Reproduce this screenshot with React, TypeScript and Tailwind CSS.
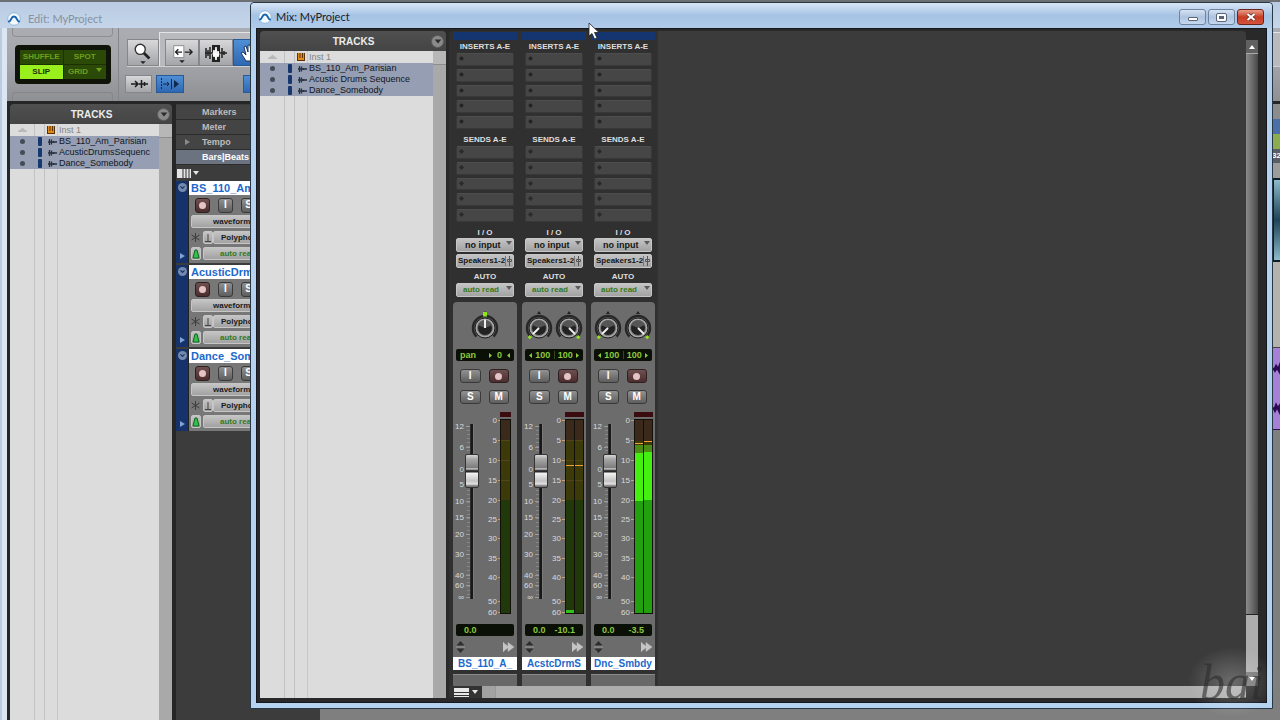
import { clsx } from "clsx";
import { ChevronDown } from "lucide-react";

type Track = { name: string; strip: string; mixName: string };

const tracks: Track[] = [
  { name: "BS_110_Am_Parisian", strip: "BS_110_Am_Prsn", mixName: "BS_110_Am_Parisian" },
  { name: "AcusticDrumsSequenc", strip: "AcusticDrmsSqnc", mixName: "Acustic Drums Sequence" },
  { name: "Dance_Somebody", strip: "Dance_Somebody", mixName: "Dance_Somebody" },
];

type Channel = {
  name: string;
  stereo: boolean;
  peak: string;
  lit?: boolean;
  hold?: number[];
};

const channels: Channel[] = [
  { name: "BS_110_A_", stereo: false, peak: "" },
  { name: "AcstcDrmS", stereo: true, peak: "-10.1", hold: [54, 54] },
  { name: "Dnc_Smbdy", stereo: true, peak: "-3.5", lit: true, hold: [32, 30] },
];

const faderMarks: [string, number][] = [
  ["12", 14], ["6", 35], ["0", 57], ["5", 72], ["10", 89], ["15", 105],
  ["20", 122], ["30", 142], ["40", 163], ["60", 173], ["∞", 185],
];

const meterMarks: [string, number][] = [
  ["0", 8], ["5", 28], ["10", 48], ["15", 68], ["20", 88], ["25", 107],
  ["30", 126], ["35", 146], ["40", 165], ["50", 189], ["60", 200],
];

const SCALE_FONT = "Liberation Sans, Arial, sans-serif";

function AppLogo() {
  return (
    <svg viewBox="0 0 14 14" className="size-[14px] shrink-0">
      <circle cx="7" cy="7" r="6.3" fill="#f4f9fd" stroke="#8fb9dc" />
      <path d="M2 9.5C4 9.5 4 4.5 7 4.5S10 9.5 12 9.5" fill="none" stroke="#1763ad" strokeWidth="2" strokeLinecap="round" />
    </svg>
  );
}

function WaveGlyph() {
  return (
    <svg viewBox="0 0 9 8" className="h-2 w-[9px]">
      <path d="M0 4H9M1.500 1V7M3.500 1.500V6.500M5.500 3V5" stroke="#26303f" strokeWidth="1.300" />
    </svg>
  );
}

function TrackList({ names, className }: { names: string[]; className: string }) {
  return (
    <aside className={clsx("flex shrink-0 flex-col", className)}>
      <header className="flex h-5 items-center rounded-t bg-gradient-to-b from-[#505050] to-[#444] pr-[2px]">
        <h2 className="flex-1 pl-4 text-center text-[10px] font-bold text-[#ececec]">TRACKS</h2>
        <button aria-label="Track list menu" className="grid size-[13px] place-items-center rounded-full border border-[#5c5c5c] bg-[#8a8a8a]">
          <svg viewBox="0 0 8 6" className="h-[5px] w-2"><path d="M0 0.500H8L4 5.500Z" fill="#2c2c2c" /></svg>
        </button>
      </header>
      <div className="flex min-h-0 flex-1 bg-[#dcdcdc]">
        <div className="relative flex-1">
          <div className="absolute inset-y-0 left-6 w-[11px] border-x border-[#c2c2c2]" />
          <div className="absolute inset-y-0 left-[47px] border-l border-[#c8c8c8]" />
          <ul className="relative text-[9px] leading-[11px] text-[#10161f]">
            <li className="flex h-3 items-center text-[#858585]">
              <span className="grid w-6 place-items-center">
                <svg viewBox="0 0 9 6" className="h-[6px] w-[9px]"><path d="M0 5H9V4L6.500 2.500L4.500 0.500L2.500 2.500L0 4Z" fill="#b9b9b9" /></svg>
              </span>
              <span className="w-3" />
              <span className="w-[13px]">
                <svg viewBox="0 0 8 8" className="ml-[1px] size-2">
                  <path d="M0 0H8V8H0Z" fill="#e08a1c" />
                  <path d="M0.500 0V8M7.500 0V8M0 7.500H8M3 0V5M5.500 0V5" stroke="#5a3206" />
                </svg>
              </span>
              <span>Inst 1</span>
            </li>
            {names.map((name) => (
              <li key={name} className="flex h-[11px] items-center bg-[#959eb2] whitespace-nowrap">
                <span className="grid w-6 place-items-center"><i className="size-[5px] rounded-full bg-[#454b57]" /></span>
                <span className="grid w-3 place-items-center"><i className="h-[9px] w-1 rounded-[1px] bg-[#17376f]" /></span>
                <span className="w-[13px] pl-[2px]"><WaveGlyph /></span>
                <span>{name}</span>
              </li>
            ))}
          </ul>
        </div>
        <div className="w-[13px] bg-[#a9a9a9]">
          <div className="h-[14px] border-b border-[#8d8d8d] bg-[#b7b7b7]" />
        </div>
      </div>
    </aside>
  );
}

const toolButton = "grid shrink-0 place-items-center border border-[#85868a] bg-gradient-to-b from-[#d8d8da] to-[#a4a5a9]";
const blueTool = "grid shrink-0 place-items-center border border-[#275a99] bg-gradient-to-b from-[#4f8fd6] to-[#2f68b2]";

function EditToolbar() {
  return (
    <div className="flex h-[73px] bg-gradient-to-b from-[#acadb2] via-[#a3a4a9] to-[#8f9094]">
      <div className="flex w-[112px] flex-col justify-between border-r border-[#85868a] px-[5px]">
        <div className="h-[9px] rounded-b border border-t-0 border-[#8e8f94]" />
        <div className="ml-[3px] grid h-[39px] w-[96px] grid-cols-2 gap-px rounded border-[5px] border-[#101408] bg-[#1c3005] text-[8px] font-bold text-[#6da01b]">
          <button className="bg-[#2b4a08]">SHUFFLE</button>
          <button className="bg-[#2b4a08]">SPOT</button>
          <button className="bg-[#9af01d] text-[#1c3005]">SLIP</button>
          <button className="flex items-center justify-end gap-2 bg-[#2b4a08] pr-1">
            GRID
            <svg viewBox="0 0 6 4" className="mb-1 h-1 w-[6px]"><path d="M0 0H6L3 4Z" fill="#6da01b" /></svg>
          </button>
        </div>
        <div className="h-[9px] rounded-t border border-b-0 border-[#85868a]" />
      </div>
      <div className="flex flex-1 flex-col pl-2">
        <div className="flex h-[39px] items-end border-b border-[#d0d0d3]">
          <button aria-label="Zoomer" className={clsx(toolButton, "h-[27px] w-8")}>
            <svg viewBox="0 0 24 24" className="size-[22px]">
              <circle cx="9" cy="8" r="5.500" fill="#fff" stroke="#333" strokeWidth="1.500" />
              <path d="M13 12L19 18" stroke="#222" strokeWidth="3" />
              <path d="M9 21H15L12 24Z" fill="#222" />
            </svg>
          </button>
          <div className="flex h-[34px] flex-1 items-end border-t border-l border-[#e4e4e6] bg-[#b9babd] pl-[5px]">
            <button aria-label="Trim" className={clsx(toolButton, "h-[27px] w-[34px]")}>
              <svg viewBox="0 0 26 24" className="h-[22px] w-6">
                <path d="M4 4H15V17H4Z" fill="#fff" stroke="#888" />
                <path d="M6 11H13M16 11H24M9 8L6 11L9 14M21 8L24 11L21 14" fill="none" stroke="#222" strokeWidth="1.500" />
                <path d="M10 20H16L13 23Z" fill="#222" />
              </svg>
            </button>
            <button aria-label="Selector" className={clsx(toolButton, "h-[27px] w-[34px]")}>
              <svg viewBox="0 0 24 22" className="h-[22px] w-6">
                <path d="M8 3H16V20H8Z" fill="#222" />
                <path d="M1 11H23M2 6V16M4 8V14M6 5V17M18 6V16M20 9V13" stroke="#222" strokeWidth="1.500" />
                <path d="M9 12L10 8L11 12L12 5L13 13L14 9L15 12L14 15L13 12L12 18L11 13L10 15Z" fill="#fff" stroke="#fff" />
              </svg>
            </button>
            <button aria-label="Grabber" className={clsx(blueTool, "h-[27px] w-[34px]")}>
              <svg viewBox="0 0 22 22" className="size-[22px]">
                <path d="M7 19L2 11L4 10L7 13L5 5L7 4L9 10V3H11L12 10L14 4H16L15 12L18 8L19 9L15 19Z" fill="#fff" stroke="#1c3762" />
              </svg>
            </button>
          </div>
        </div>
        <div className="flex flex-1 items-center gap-1">
          <button aria-label="Tab to transients" className={clsx(toolButton, "-ml-[2px] h-[18px] w-[27px]")}>
            <svg viewBox="0 0 20 12" className="h-3 w-5">
              <path d="M2 6H9M6 3L9 6L6 9M10 6H19M12.500 2V10M15.500 4V8" fill="none" stroke="#1d1d1d" strokeWidth="1.500" />
            </svg>
          </button>
          <button aria-label="Link timeline" className={clsx(blueTool, "h-[18px] w-7")}>
            <svg viewBox="0 0 20 12" className="h-3 w-5">
              <path d="M1.500 0V12" stroke="#10284d" strokeDasharray="2 1" />
              <path d="M3 6H9M7 4L9 6L7 8M11.500 1V11" fill="none" stroke="#10284d" />
              <path d="M14 2V10L19 6Z" fill="#10284d" />
            </svg>
          </button>
          <button aria-label="Mirrored editing" className={clsx(blueTool, "ml-[55px] h-[18px] w-7")} />
        </div>
      </div>
    </div>
  );
}

function RecButton({ className }: { className: string }) {
  return (
    <button aria-label="Record enable" className={clsx("grid place-items-center rounded-[3px] border border-[#2f2020] bg-gradient-to-b from-[#6e5050] to-[#4c2d2e]", className)}>
      <i className="size-[7px] rounded-full bg-[#e6c4c6]" />
    </button>
  );
}

const keyButton = "rounded-[3px] border border-[#3a3a3a] bg-gradient-to-b from-[#929292] to-[#5e5e5e] text-[10px] leading-none font-bold text-white";
const greyField = "rounded-[2px] border border-[#c6c6c6] bg-gradient-to-b from-[#c4c4c4] to-[#a2a2a2] font-bold";

function EditTrack({ name }: { name: string }) {
  return (
    <section className="mb-[2px] flex h-[82px] bg-[#777]">
      <div className="flex w-3 flex-col items-center justify-between bg-[#15336a] pt-[2px] pb-1">
        <span className="grid size-[9px] place-items-center rounded-full bg-[#7489ad]">
          <ChevronDown size={7} strokeWidth={4} className="text-[#15336a]" />
        </span>
        <svg viewBox="0 0 5 6" className="h-[6px] w-[5px]"><path d="M0 0V6L5 3Z" fill="#7fa3d8" /></svg>
      </div>
      <div className="min-w-0 flex-1 border-l border-[#222]">
        <h3 className="h-[14px] bg-white pl-[2px] text-[11px] leading-[14px] font-bold whitespace-nowrap text-[#1c69cc]">{name}</h3>
        <div className="flex h-5 items-center gap-2 pl-[6px]">
          <RecButton className="size-[15px]" />
          <button className={clsx(keyButton, "size-[15px]")}>I</button>
          <button className={clsx(keyButton, "size-[15px]")}>S</button>
        </div>
        <div className="flex flex-col gap-[3px] pl-[2px] text-[8px] text-[#1a1a1a]">
          <select aria-label="Track view" className={clsx(greyField, "h-[13px] appearance-none pl-[21px]")}>
            <option>waveform</option>
          </select>
          <div className="flex">
            <svg viewBox="0 0 9 9" className="mt-[2px] mr-[3px] size-[9px]">
              <path d="M4.500 0V9M0.500 2L8.500 7M8.500 2L0.500 7" stroke="#3c3c3c" />
            </svg>
            <span className={clsx(greyField, "grid h-[13px] w-[10px] place-items-center")}>
              <svg viewBox="0 0 6 8" className="h-2 w-[6px]"><path d="M3 0V7M0 7.500H6" stroke="#444" /></svg>
            </span>
            <select aria-label="Elastic audio" className={clsx(greyField, "h-[13px] flex-1 appearance-none pl-[7px]")}>
              <option>Polyphonic</option>
            </select>
          </div>
          <div className="flex gap-[2px]">
            <span className={clsx(greyField, "grid h-[13px] w-[10px] place-items-center")}>
              <svg viewBox="0 0 8 10" className="h-[10px] w-2"><path d="M3 1H5L7 9H1Z" fill="#32c247" stroke="#126420" /></svg>
            </span>
            <select aria-label="Track automation" className={clsx(greyField, "h-[13px] flex-1 appearance-none pl-4 text-[#347a1c]")}>
              <option>auto read</option>
            </select>
          </div>
        </div>
      </div>
    </section>
  );
}

function EditWindow() {
  return (
    <main className="absolute inset-0 flex flex-col bg-[#bccbe0]">
      <div className="flex h-7 shrink-0 items-center gap-[7px] border-t-2 border-[#6c6f73] bg-gradient-to-b from-[#b9cbe3] to-[#c5d6ea] pt-2 pl-[7px]">
        <AppLogo />
        <h1 className="font-[Lato,sans-serif] text-[11px] text-[#87909c]">Edit: MyProject</h1>
      </div>
      <div className="ml-[2px] flex min-h-0 flex-1 flex-col border-l-[5px] border-[#dce6f2]">
        <EditToolbar />
        <div className="flex min-h-0 flex-1 bg-[#262626] pt-[3px]">
          <TrackList names={tracks.map((t) => t.name)} className="ml-[3px] w-[162px]" />
          <div className="ml-1 w-36 bg-[#3c3c3c] pt-px">
            <ul className="text-[9px] leading-[14px] font-bold text-[#bdbdbd]">
              {["Markers", "Meter", "Tempo", "Bars|Beats"].map((r) => (
                <li
                  key={r}
                  className={clsx(
                    "flex h-[15px] items-center border-b border-[#2c2c2c]",
                    r === "Bars|Beats" ? "bg-[#6b7280] text-white" : "bg-[#444]"
                  )}
                >
                  <span className="w-[26px] pl-[9px]">
                    {r === "Tempo" && <svg viewBox="0 0 5 6" className="h-[6px] w-[5px]"><path d="M0 0V6L5 3Z" fill="#8a8a8a" /></svg>}
                  </span>
                  {r}
                </li>
              ))}
            </ul>
            <div className="flex h-4 items-center gap-[2px] pl-px">
              <svg viewBox="0 0 14 9" className="h-[9px] w-[14px]">
                <path d="M0 0H14V9H0Z" fill="#e4e4e4" />
                <path d="M6 0V9M9 0V9M12 0V9" stroke="#333" />
              </svg>
              <svg viewBox="0 0 6 4" className="h-1 w-[6px]"><path d="M0 0H6L3 4Z" fill="#e4e4e4" /></svg>
            </div>
            {tracks.map((t) => <EditTrack key={t.strip} name={t.strip} />)}
          </div>
          <div className="flex flex-1 justify-end bg-[#7f7f7f]">
            <div className="w-2 overflow-hidden">
              <div className="h-[15px] bg-[#8c8c8c]" />
              <div className="h-[15px] bg-[#4a6fa9]" />
              <div className="h-[15px] bg-[#8cac50]" />
              <div className="h-[14px] bg-[#585d66] text-[8px] leading-[14px] font-bold text-white">32</div>
              <div className="h-[15px] bg-[#9c9c9c]" />
              <div className="h-[84px] border-2 border-r-0 border-[#0f1c28] bg-gradient-to-b from-[#8dbccb] via-[#1d4458] to-[#8dbccb]" />
              <div className="h-[86px] border-b border-[#444] bg-[#b3b2ac]" />
              <div className="h-[82px] border-b border-[#301050] bg-[#a67fd6]">
                <svg viewBox="0 0 8 82" className="h-full w-2">
                  <path d="M0 20H2L4 16L6 19L8 14V27L5 22L3 25L1 22ZM0 60H2L4 55L6 59L8 56V68L5 62L3 66L1 62Z" fill="#2c0a52" />
                </svg>
              </div>
            </div>
          </div>
        </div>
      </div>
    </main>
  );
}

function Knob({ angle, hub }: { angle: number; hub?: boolean }) {
  return (
    <label>
      <svg viewBox="0 0 28 32" className="h-8 w-7">
        <path d="M5.500 26.500A12 12 0 1 1 22.500 26.500" fill="none" stroke="#272727" strokeWidth="2.500" />
        <path d="M12 4L14 1L16 4Z" fill="#222" />
        <circle cx="14" cy="18" r="10" fill="#a6a6a6" stroke="#1c1c1c" />
        <circle cx="14" cy="18" r="7.500" fill="#222" stroke="#777" />
        <path d="M7 15A7.500 7.500 0 0 1 21 15L14 18Z" fill="#555" />
        <g transform={`rotate(${angle} 14 18)`}>
          <path d="M14 18V9.500" stroke="#eee" strokeWidth="2" />
          <path d={hub ? "M12 2H16V6.500H12Z" : "M12.500 3.500H15.500V6.500H12.500Z"} fill="#8ee51c" />
        </g>
      </svg>
      <input type="range" aria-label="Pan" min={-100} max={100} defaultValue={hub ? 0 : angle < 0 ? -100 : 100} className="sr-only" />
    </label>
  );
}

function Meter({ stereo, lit, hold }: Channel) {
  const bars = stereo ? [44, 53] : [48];
  const width = stereo ? 8 : 9;
  const left = bars[0] - 1;
  const right = stereo ? 62 : 58;
  const labelX = stereo ? 39 : 44;
  return (
    <div className="relative h-[206px]">
      <svg viewBox="0 0 64 206" className="h-full w-16" fontFamily={SCALE_FONT} fontSize="8" fill="#dadada">
        {faderMarks.map(([t, y]) => (
          <g key={t}>
            <text x="11" y={y + 3} textAnchor="end">{t}</text>
            <path d={`M13 ${y + 0.5}H17`} stroke="#999" />
          </g>
        ))}
        <path d="M15.500 14V185" stroke="#a2a2a2" strokeWidth="3" strokeDasharray="1 3" opacity="0.5" />
        {meterMarks.map(([t, y]) => (
          <g key={t}>
            <text x={labelX} y={y + 3} textAnchor="end">{t}</text>
            <path d={`M${labelX + 1} ${y + 0.5}H${left}`} stroke="#c7a17c" />
          </g>
        ))}
        <path d={`M${left} 0H${right}V5H${left}Z`} fill="#3a0b0f" />
        <path d={`M${left} 7H${right}V202H${left}Z`} fill="#101008" />
        {bars.map((x, i) => (
          <g key={x}>
            <rect x={x} y="8" width={width} height="21" fill="#3b2a1b" />
            <rect x={x} y="29" width={width} height="59" fill="#3d3a09" />
            <rect x={x} y="88" width={width} height="113" fill={lit ? "#23a00f" : "#21380a"} />
            {lit && <rect x={x} y="33" width={width} height="8" fill="#4c8c16" />}
            {lit && <rect x={x} y={i ? 40 : 41} width={width} height="48" fill="#46ef12" />}
            {!lit && <path d={`M${x} 28.500h${width}M${x} 48.500h${width}M${x} 68.500h${width}`} stroke="#54441a" />}
            {hold && <rect x={x} y={hold[i] - 1} width={width} height="1" fill="#f0a030" />}
            {stereo && !lit && i === 0 && <rect x={x} y="198" width={width} height="3" fill="#2ec41b" />}
          </g>
        ))}
      </svg>
      <input
        type="range"
        aria-label="Volume"
        min={0}
        max={100}
        defaultValue={79}
        className="absolute top-3 left-3 h-[175px] w-[14px] appearance-none bg-[linear-gradient(90deg,transparent_5px,#444_5px,#181818_6px,#181818_8px,#888_8px,transparent_9px)] [direction:rtl] [writing-mode:vertical-lr] [&::-webkit-slider-thumb]:h-[34px] [&::-webkit-slider-thumb]:w-[14px] [&::-webkit-slider-thumb]:appearance-none [&::-webkit-slider-thumb]:rounded-[2px] [&::-webkit-slider-thumb]:border [&::-webkit-slider-thumb]:border-[#333] [&::-webkit-slider-thumb]:bg-[linear-gradient(180deg,#d8d8d8_0px,#a8a8a8_4px,#7b7b7b_13px,#eee_14px,#444_15px,#222_17px,#f4f4f4_18px,#c2c2c2_26px,#e2e2e2_29px,#777_31px)]"
      />
    </div>
  );
}

function Slots({ plus }: { plus?: boolean }) {
  return (
    <div className="mx-[3px] grid h-[76px] grid-rows-5 gap-[3px]">
      {[0, 1, 2, 3, 4].map((n) => (
        <button key={n} aria-label={plus ? "Send" : "Insert"} className="flex items-start rounded-[2px] border border-[#383838] border-t-[#4d4d4d] bg-[#464646] pt-[2px] pl-[2px]">
          <svg viewBox="0 0 5 5" className="size-[5px]">
            {plus ? <path d="M2.500 0L5 2.500L2.500 5L0 2.500Z" fill="#2a2a2a" /> : <circle cx="2.500" cy="2.500" r="2" fill="#242424" />}
          </svg>
        </button>
      ))}
    </div>
  );
}

function DropArrow() {
  return (
    <svg viewBox="0 0 6 4" className="pointer-events-none absolute top-[3px] right-[2px] h-1 w-[6px]">
      <path d="M0 0H6L3 4Z" fill="#5b5b5b" />
    </svg>
  );
}

const readout = "mx-[3px] flex h-3 items-center rounded-[2px] bg-[#0b1006] text-[9px] leading-none font-bold text-[#8bc83c]";
const arrow = "h-[5px] w-[3px]";

function Strip(props: Channel) {
  const { name, stereo, peak } = props;
  return (
    <section className="flex w-16 shrink-0 flex-col pt-px">
      <div className="h-2 bg-[#14356f]" />
      <h3 className="h-[13px] text-center text-[8px] leading-[14px] font-bold whitespace-nowrap text-[#dedede]">INSERTS A-E</h3>
      <Slots />
      <h3 className="mt-1 h-[13px] text-center text-[8px] leading-[13px] font-bold text-[#dedede]">SENDS A-E</h3>
      <Slots plus />
      <h3 className="mt-1 h-3 text-center text-[8px] leading-[13px] font-bold text-[#dedede]">I / O</h3>
      <div className="relative mx-[3px]">
        <select aria-label="Input" className={clsx(greyField, "block h-[14px] w-full appearance-none pl-2 text-[9px] leading-[12px] text-[#151515]")}>
          <option>no input</option>
        </select>
        <DropArrow />
      </div>
      <div className="relative mx-[3px] mt-[2px]">
        <select aria-label="Output" className={clsx(greyField, "block h-[14px] w-full appearance-none pl-px text-[8px] leading-[12px] text-[#151515]")}>
          <option>Speakers1-2</option>
        </select>
        <svg viewBox="0 0 8 10" className="pointer-events-none absolute top-[2px] right-px h-[10px] w-2">
          <path d="M0.500 0V10" stroke="#777" />
          <path d="M4.500 0V10M2.500 3.500H6.500V5.500H2.500Z" fill="#bbb" stroke="#555" />
        </svg>
      </div>
      <h3 className="mt-[3px] h-3 text-center text-[8px] leading-[12px] font-bold text-[#dedede]">AUTO</h3>
      <div className="relative mx-[3px]">
        <select aria-label="Automation" className={clsx(greyField, "block h-[14px] w-full appearance-none pl-[6px] text-[8px] leading-[12px] text-[#347a1c]")}>
          <option>auto read</option>
        </select>
        <DropArrow />
      </div>
      <div className="mt-[5px] rounded-t bg-[#6c6c6c]">
        <div className="flex h-[47px] items-center justify-center gap-[2px] pt-px">
          {stereo ? (
            <>
              <Knob angle={-135} />
              <Knob angle={135} />
            </>
          ) : (
            <Knob angle={0} hub />
          )}
        </div>
        <div className={clsx(readout, "justify-between px-1")}>
          {stereo ? (
            <>
              <svg viewBox="0 0 3 5" className={arrow}><path d="M3 0V5L0 2.500Z" fill="#8bc83c" /></svg>
              <span>100</span>
              <i className="h-2 w-px bg-[#38451f]" />
              <span>100</span>
            </>
          ) : (
            <>
              <span>pan</span>
              <svg viewBox="0 0 3 5" className={clsx(arrow, "ml-2")}><path d="M0 0V5L3 2.500Z" fill="#8bc83c" /></svg>
              <span>0</span>
            </>
          )}
          <svg viewBox="0 0 3 5" className={arrow}>
            <path d={stereo ? "M0 0V5L3 2.500Z" : "M3 0V5L0 2.500Z"} fill="#8bc83c" />
          </svg>
        </div>
        <div className="mt-2 grid grid-cols-2 gap-x-2 gap-y-[7px] pr-2 pl-[7px]">
          <button className={clsx(keyButton, "h-[14px]")}>I</button>
          <RecButton className="h-[14px]" />
          <button className={clsx(keyButton, "h-[14px]")}>S</button>
          <button className={clsx(keyButton, "h-[14px]")}>M</button>
        </div>
        <div className="mt-2">
          <Meter {...props} />
        </div>
        <div className={clsx(readout, "mt-[6px] justify-between pr-2 pl-2")}>
          <span>0.0</span>
          <span>{peak}</span>
        </div>
        <div className="flex h-[21px] items-center justify-between px-[3px]">
          <svg viewBox="0 0 9 12" className="h-3 w-[9px]">
            <path d="M0.500 4.500L4.500 0L8.500 4.500ZM0.500 7.500L4.500 12L8.500 7.500Z" fill="#2e2e2e" />
            <path d="M0 6H9" stroke="#999" />
          </svg>
          <svg viewBox="0 0 11 10" className="h-[10px] w-[11px]">
            <path d="M0.500 0V10M0 0.500L6 5L0 9.500ZM5 0.500L11 5L5 9.500Z" fill="#c4c4c4" stroke="#c4c4c4" strokeWidth="0.500" />
          </svg>
        </div>
      </div>
      <h3 className="h-[13px] bg-white text-center text-[10px] leading-[13px] font-bold whitespace-nowrap text-[#1c69cc]">{name}</h3>
      <div className="mt-1 flex-1 border-t border-[#8a8a8a] bg-[#686868]" />
    </section>
  );
}

const windowButton = "grid h-4 w-[27px] place-items-center rounded-[3px] border border-[#6d83a0] bg-gradient-to-b from-[#d6e3f3] via-[#aec3df] to-[#c5d8ef]";

function MixWindow() {
  return (
    <section className="absolute top-[2px] right-[7px] bottom-[11px] left-[250px] flex flex-col rounded-t border border-[#273744] bg-[#b5d3f0] px-[5px] pb-[5px]">
      <div className="-mx-[5px] flex h-[25px] shrink-0 items-center gap-[2px] rounded-t bg-gradient-to-b from-[#d7e6f6] via-[#a6c3e4] to-[#b0cbea] pt-[3px] pr-2 pl-[7px]">
        <AppLogo />
        <h1 className="flex-1 pl-[2px] font-[Lato,sans-serif] text-[11px] text-[#15202e]">Mix: MyProject</h1>
        <button aria-label="Minimize" className={windowButton}>
          <i className="mt-1 h-1 w-[10px] rounded-[1px] border border-[#5a6676] bg-white" />
        </button>
        <button aria-label="Maximize" className={windowButton}>
          <i className="h-[7px] w-[9px] rounded-[1px] border-2 border-white bg-[#5a6676] outline outline-[#5a6676]" />
        </button>
        <button aria-label="Close" className="grid h-4 w-[27px] place-items-center rounded-[3px] border border-[#6c2418] bg-gradient-to-b from-[#e69c8c] via-[#c83a22] to-[#d4543c]">
          <svg viewBox="0 0 10 8" className="h-2 w-[10px]">
            <path d="M1.500 1L8.500 7M8.500 1L1.500 7" stroke="#5b2a24" strokeWidth="3.500" />
            <path d="M1.500 1L8.500 7M8.500 1L1.500 7" stroke="#fff" strokeWidth="2.200" />
          </svg>
        </button>
      </div>
      <div className="flex min-h-0 flex-1 border border-[#15191d] bg-[#292929] pt-[2px] pr-2 pb-1 pl-[3px]">
        <TrackList names={tracks.map((t) => t.mixName)} className="w-[186px]" />
        <div className="ml-[3px] flex min-w-0 flex-1 flex-col">
          <div className="flex min-h-0 flex-1">
            <div className="flex min-w-0 flex-1 overflow-hidden rounded-t bg-[#3b3b3b]">
              <div className="flex gap-[5px] border-r border-[#333] bg-[#303030] pr-[2px] pl-1">
                {channels.map((c) => <Strip key={c.name} {...c} />)}
              </div>
            </div>
            <div className="mt-[9px] flex w-3 flex-col">
              <button aria-label="Scroll up" className="grid h-[14px] place-items-center border-b border-[#aaa] bg-[#606060]">
                <svg viewBox="0 0 6 4" className="h-1 w-[6px]"><path d="M0 4H6L3 0Z" fill="#fff" /></svg>
              </button>
              <div className="flex-1 bg-gradient-to-r from-[#8a8a8a] via-[#6c6c6c] to-[#474747]" />
              <div className="h-[58px] border-t border-[#222] bg-[#adadad]" />
              <button aria-label="Scroll down" className="grid h-[14px] place-items-center bg-[#777]">
                <svg viewBox="0 0 6 4" className="h-1 w-[6px]"><path d="M0 0H6L3 4Z" fill="#fff" /></svg>
              </button>
            </div>
          </div>
          <div className="flex h-3 shrink-0 pr-3">
            <button aria-label="Mix view" className="flex w-[33px] items-center gap-[3px] bg-[#333] pl-[5px]">
              <svg viewBox="0 0 15 9" className="h-[9px] w-[15px]">
                <path d="M0 0H15V9H0Z" fill="#e8e8e8" />
                <path d="M0 4.500H15M0 7.500H15" stroke="#333" />
              </svg>
              <svg viewBox="0 0 6 4" className="h-1 w-[6px]"><path d="M0 0H6L3 4Z" fill="#e8e8e8" /></svg>
            </button>
            <div className="flex flex-1 bg-[#adadad]">
              <div className="w-[14px] border-r border-[#999] bg-[#a2a2a2]" />
            </div>
          </div>
        </div>
      </div>
    </section>
  );
}

export default function App() {
  return (
    <div className="relative h-screen w-full overflow-hidden font-['Liberation_Sans',Arial,sans-serif]">
      <EditWindow />
      <MixWindow />
      <div className="pointer-events-none absolute right-0 bottom-0 h-[76px] w-[96px] bg-[radial-gradient(ellipse_at_center,rgba(255,255,255,0.25),transparent_65%)]">
        <p className="pl-4 font-['Liberation_Serif',serif] text-[50px] leading-[76px] text-[#2b2b2b]/60 italic">bai</p>
      </div>
      <svg viewBox="0 0 12 18" className="pointer-events-none absolute top-[22px] left-[588px] h-[18px] w-3">
        <path d="M1 1V14L4 11.500L6.500 17L9 16L6.500 10.500H11Z" fill="#fff" stroke="#222" strokeWidth="0.800" />
      </svg>
    </div>
  );
}
